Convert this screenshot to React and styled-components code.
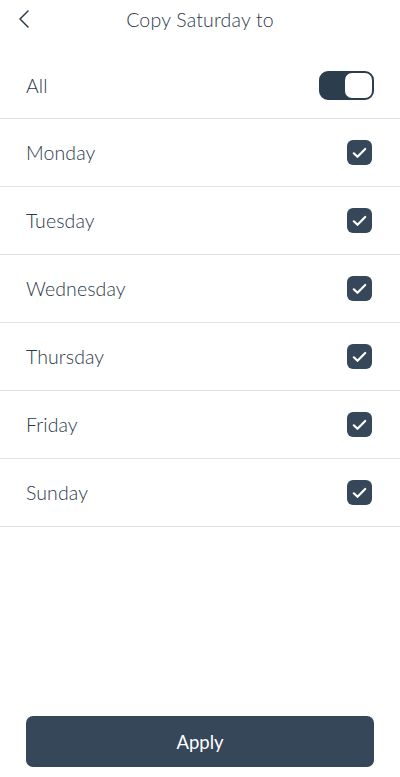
import styled, { createGlobalStyle } from "styled-components";

const Global = createGlobalStyle`
  body {
    margin: 0;
    background: #fff;
    font-family: Lato, "Noto Sans", sans-serif;
    color: #2b3949;
  }
`

const Root = styled.div`
  width: 400px;
  height: 777px;
  display: flex;
  flex-direction: column;
  background: #fff;
`

const Header = styled.div`
  height: 38px;
  display: flex;
  align-items: center;
  justify-content: center;
  position: relative;
`

const Back = styled.button`
  position: absolute;
  left: 12px;
  top: 7px;
  width: 24px;
  height: 24px;
  padding: 0;
  border: none;
  background: none;
  display: flex;
  align-items: center;
  justify-content: center;
`

const Title = styled.h1`
  margin: 0;
  font-size: 19.5px;
  font-weight: 300;
  color: #2b3949;
  letter-spacing: 0.2px;
`

const List = styled.div`
  display: flex;
  flex-direction: column;
  margin-top: 14px;
`

const Row = styled.div`
  box-sizing: border-box;
  height: ${p => p.$h}px;
  display: flex;
  align-items: center;
  justify-content: space-between;
  padding: 0 26px;
  border-bottom: 1px solid #e2e3e4;
`

const Label = styled.span`
  font-size: 19.5px;
  font-weight: 300;
  color: #2b3949;
  letter-spacing: 0.1px;
`

const Toggle = styled.div`
  width: 55px;
  height: 29px;
  box-sizing: border-box;
  border: 2px solid #2c3e4d;
  border-radius: 9px;
  background: #2c3e4d;
  display: flex;
  justify-content: flex-end;
`

const Knob = styled.div`
  width: 27px;
  height: 25px;
  background: #fff;
  border-radius: 7px;
`

const Check = styled.div`
  width: 25px;
  height: 25px;
  margin-right: 2px;
  border-radius: 6px;
  background: #354759;
  display: flex;
  align-items: center;
  justify-content: center;
`

const Spacer = styled.div`
  flex: 1;
`

const Footer = styled.div`
  padding: 0 26px 10px;
`

const ApplyButton = styled.button`
  width: 100%;
  height: 51px;
  border: none;
  border-radius: 7px;
  background: #354759;
  color: #fff;
  font-family: Lato, "Noto Sans", sans-serif;
  font-size: 18.5px;
  font-weight: 400;
`

const days = ["Monday", "Tuesday", "Wednesday", "Thursday", "Friday", "Sunday"];

const App = () => {
  return (
    <Root>
      <Global />
      <Header>
        <Back>
          <svg width="14" height="20" viewBox="0 0 14 20" fill="none">
            <path d="M11 2 L3 10 L11 18" stroke="#2b3949" strokeWidth="1.5" strokeLinecap="round" strokeLinejoin="round" />
          </svg>
        </Back>
        <Title>Copy Saturday to</Title>
      </Header>
      <List>
        <Row $h={67}>
          <Label>All</Label>
          <Toggle><Knob /></Toggle>
        </Row>
        {days.map(d => (
          <Row key={d} $h={68}>
            <Label>{d}</Label>
            <Check>
              <svg width="15" height="12" viewBox="0 0 15 12" fill="none">
                <path d="M1.8 6.3 L5.5 9.8 L13.2 2" stroke="#fff" strokeWidth="2.2" strokeLinecap="round" strokeLinejoin="round" />
              </svg>
            </Check>
          </Row>
        ))}
      </List>
      <Spacer />
      <Footer>
        <ApplyButton>Apply</ApplyButton>
      </Footer>
    </Root>
  )
}

export default App;
